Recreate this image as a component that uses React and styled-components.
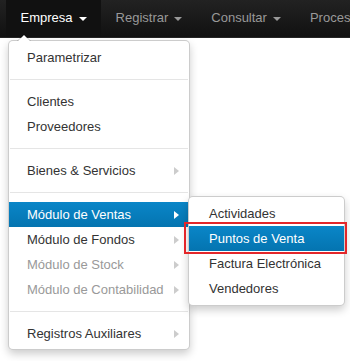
import React from 'react';
import styled, { createGlobalStyle } from 'styled-components';

const GlobalStyle = createGlobalStyle`
  body {
    margin: 0;
    background: #fff;
    font-family: "Liberation Sans", Helvetica, Arial, sans-serif;
    font-size: 13px;
    color: #333;
  }
`;

const Page = styled.div`
  width: 100vw;
  height: 100vh;
  overflow: hidden;
  background: #fff;
`;

const Navbar = styled.div`
  height: 37px;
  background-image: linear-gradient(to bottom, #222, #111);
  border-bottom: 1px solid #252525;
`;

const NavList = styled.ul`
  display: flex;
  margin: 0;
  padding: 0 0 0 6px;
  list-style: none;
  white-space: nowrap;
`;

const NavItem = styled.li`
  position: relative;
  background: ${(p) => (p.$open ? '#111' : 'transparent')};
`;

const NavLink = styled.a`
  display: flex;
  align-items: center;
  gap: 6px;
  padding: 8px 14.5px 9px;
  line-height: 20px;
  color: ${(p) => (p.$open ? '#fff' : '#999')};
  text-decoration: none;
  cursor: pointer;
`;

const Caret = styled.span`
  display: inline-block;
  width: 0;
  height: 0;
  margin-top: 1px;
  border-top: 4px solid ${(p) => (p.$open ? '#fff' : '#999')};
  border-left: 4px solid transparent;
  border-right: 4px solid transparent;
`;

const Dropdown = styled.ul`
  position: absolute;
  top: 100%;
  left: 2px;
  width: 180px;
  margin: 3px 0 0;
  padding: 4px 0 3px;
  list-style: none;
  background: #fff;
  border: 1px solid rgba(0, 0, 0, 0.2);
  border-radius: 5px;
  box-shadow: 0 4px 9px rgba(0, 0, 0, 0.2);
  z-index: 10;

  &::before {
    content: '';
    position: absolute;
    top: -7px;
    left: 8px;
    border-left: 7px solid transparent;
    border-right: 7px solid transparent;
    border-bottom: 7px solid rgba(0, 0, 0, 0.2);
  }
  &::after {
    content: '';
    position: absolute;
    top: -6px;
    left: 9px;
    border-left: 6px solid transparent;
    border-right: 6px solid transparent;
    border-bottom: 6px solid #fff;
  }
`;

const SubMenu = styled.ul`
  position: absolute;
  top: -6px;
  left: 100%;
  width: 155px;
  margin: 0 0 0 -1px;
  padding: 4px 0;
  list-style: none;
  background: #fff;
  border: 1px solid rgba(0, 0, 0, 0.2);
  border-radius: 5px;
  box-shadow: 0 4px 9px rgba(0, 0, 0, 0.2);
  z-index: 11;
`;

const MenuItem = styled.li`
  position: relative;
`;

const MenuLink = styled.a`
  position: relative;
  display: flex;
  align-items: center;
  justify-content: space-between;
  height: 25px;
  padding: 0 10px 0 ${(p) => (p.$sub ? '20px' : '18px')};
  color: ${(p) => (p.$active ? '#fff' : p.$disabled ? '#999' : '#333')};
  background-image: ${(p) =>
    p.$active ? 'linear-gradient(to bottom, #0a86c8, #0474b0)' : 'none'};
  text-decoration: none;
  white-space: nowrap;
  cursor: pointer;

  ${(p) =>
    p.$marked &&
    `
    &::after {
      content: '';
      position: absolute;
      top: -4px;
      bottom: -3px;
      left: -5px;
      right: -3px;
      border: 2px solid #e3262a;
      pointer-events: none;
    }
  `}
`;

const Arrow = styled.span`
  width: 0;
  height: 0;
  margin-left: 4px;
  border-top: 4px solid transparent;
  border-bottom: 4px solid transparent;
  border-left: 5px solid ${(p) => (p.$active ? '#fff' : '#ccc')};
`;

const Divider = styled.li`
  height: 1px;
  margin: 9px 1px 8px;
  background: #e5e5e5;
  border-bottom: 1px solid #fff;
`;

const topItems = ['Empresa', 'Registrar', 'Consultar', 'Procesos'];

const ventas = [
  { label: 'Actividades' },
  { label: 'Puntos de Venta', active: true, marked: true },
  { label: 'Factura Electrónica' },
  { label: 'Vendedores' },
];

const Entry = ({ label, arrow, active, disabled, children }) => (
  <MenuItem>
    <MenuLink $active={active} $disabled={disabled}>
      <span>{label}</span>
      {arrow && <Arrow $active={active} />}
    </MenuLink>
    {children}
  </MenuItem>
);

const EmpresaMenu = () => (
  <Dropdown>
    <Entry label="Parametrizar" />
    <Divider />
    <Entry label="Clientes" />
    <Entry label="Proveedores" />
    <Divider />
    <Entry label="Bienes & Servicios" arrow />
    <Divider />
    <Entry label="Módulo de Ventas" arrow active>
      <SubMenu>
        {ventas.map((v) => (
          <MenuItem key={v.label}>
            <MenuLink $sub $active={v.active} $marked={v.marked}>
              <span>{v.label}</span>
            </MenuLink>
          </MenuItem>
        ))}
      </SubMenu>
    </Entry>
    <Entry label="Módulo de Fondos" arrow />
    <Entry label="Módulo de Stock" arrow disabled />
    <Entry label="Módulo de Contabilidad" arrow disabled />
    <Divider />
    <Entry label="Registros Auxiliares" arrow />
  </Dropdown>
);

export default function App() {
  return (
    <Page>
      <GlobalStyle />
      <Navbar>
        <NavList>
          {topItems.map((t, i) => (
            <NavItem key={t} $open={i === 0}>
              <NavLink $open={i === 0}>
                {t}
                <Caret $open={i === 0} />
              </NavLink>
              {i === 0 && <EmpresaMenu />}
            </NavItem>
          ))}
        </NavList>
      </Navbar>
    </Page>
  );
}
